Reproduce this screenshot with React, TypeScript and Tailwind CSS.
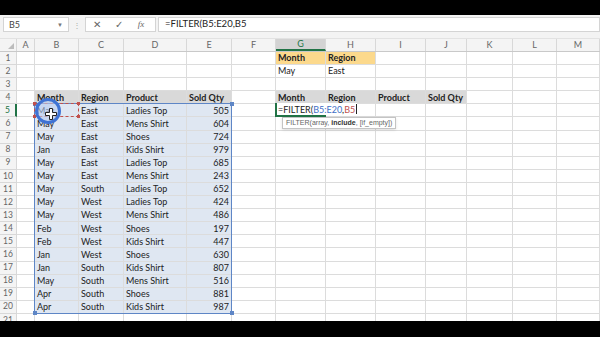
import clsx from 'clsx';

// column widths: row header, A..M
const colW = [
  'w-[17px]', 'w-[18px]', 'w-[44px]', 'w-[45px]', 'w-[63px]', 'w-[45px]', 'w-[44px]',
  'w-[50px]', 'w-[50px]', 'w-[50px]', 'w-[41px]', 'w-[46px]', 'w-[44px]', 'w-[43px]',
];
const letters = ['', 'A', 'B', 'C', 'D', 'E', 'F', 'G', 'H', 'I', 'J', 'K', 'L', 'M'];

const data: [string, string, string, number][] = [
  ['May', 'East', 'Ladies Top', 505],
  ['May', 'East', 'Mens Shirt', 604],
  ['May', 'East', 'Shoes', 724],
  ['Jan', 'East', 'Kids Shirt', 979],
  ['May', 'East', 'Ladies Top', 685],
  ['May', 'East', 'Mens Shirt', 243],
  ['May', 'South', 'Ladies Top', 652],
  ['May', 'West', 'Ladies Top', 424],
  ['May', 'West', 'Mens Shirt', 486],
  ['Feb', 'West', 'Shoes', 197],
  ['Feb', 'West', 'Kids Shirt', 447],
  ['Jan', 'West', 'Shoes', 630],
  ['Jan', 'South', 'Kids Shirt', 807],
  ['May', 'South', 'Mens Shirt', 516],
  ['Apr', 'South', 'Shoes', 881],
  ['Apr', 'South', 'Kids Shirt', 987],
];

type Cell = { v?: string; cls?: string };

function getCell(r: number, c: number): Cell {
  const hdr = 'font-bold text-[9.5px] bg-[#d9d9d9]';
  if (r === 1 && c === 7) return { v: 'Month', cls: 'font-bold text-[9.5px] bg-[#fcd98c]' };
  if (r === 1 && c === 8) return { v: 'Region', cls: 'font-bold text-[9.5px] bg-[#fcd98c]' };
  if (r === 2 && c === 7) return { v: 'May' };
  if (r === 2 && c === 8) return { v: 'East' };
  if (r === 4) {
    const h: Record<number, string> = { 2: 'Month', 3: 'Region', 4: 'Product', 5: 'Sold Qty', 7: 'Month', 8: 'Region', 9: 'Product', 10: 'Sold Qty' };
    if (h[c]) return { v: h[c], cls: hdr };
  }
  if (r >= 5 && r <= 20 && c >= 2 && c <= 5) {
    const row = data[r - 5];
    const v = c === 5 ? String(row[3]) : row[c - 2];
    return { v, cls: clsx('bg-[#dfe7f2]', c === 5 && 'justify-end') };
  }
  return {};
}

function PlusCursor() {
  return (
    <svg width="12" height="12" viewBox="0 0 12 12" className="absolute left-[7px] top-[7px]">
      <path d="M4.5 0.5h3v4h4v3h-4v4h-3v-4h-4v-3h4z" fill="#fff" stroke="#222" strokeWidth="1" />
    </svg>
  );
}

function FormulaBar() {
  return (
    <div className="h-[24px] bg-[#f3f3f3] border-b border-[#e2e2e2] flex items-start pt-[2px] text-[#444]">
      <div className="ml-[3px] w-[66px] h-[15px] bg-white border border-[#d4d4d4] flex items-center justify-between px-[5px] text-[9px]">
        <span>B5</span>
        <span className="text-[6px] text-[#777]">▼</span>
      </div>
      <div className="w-[16px] h-[15px] flex items-center justify-center text-[8px] text-[#aaa]">⋮</div>
      <div className="w-[71px] h-[15px] bg-white border border-[#d4d4d4] flex items-center text-[#666]">
        <span className="w-[22px] text-center text-[10px]">✕</span>
        <span className="w-[22px] text-center text-[10px]">✓</span>
        <span className="w-[22px] text-center text-[9px] italic font-['Liberation_Serif',serif]">fx</span>
      </div>
      <div className="ml-[2px] flex-1 h-[15px] bg-white border border-[#d4d4d4] flex items-center px-[6px] text-[9.5px] text-[#222]">
        =FILTER(B5:E20,B5
      </div>
    </div>
  );
}

function HeaderRow() {
  return (
    <div className="flex h-[13px] shrink-0 bg-[#f4f4f4] border-b border-[#c9c9c9]">
      {colW.map((w, c) => (
        <div
          key={c}
          className={clsx(
            w,
            'shrink-0 h-full border-r border-[#d8d8d8] flex items-center justify-center text-[9px] text-[#666] relative',
            c === 7 && 'bg-[#d3d3d3] border-b-2 border-b-[#217346] text-[#217346]'
          )}
        >
          {c === 0 ? (
            <div className="absolute right-[2px] bottom-[2px] w-0 h-0 border-l-[6px] border-l-transparent border-b-[6px] border-b-[#bcbcbc]" />
          ) : (
            letters[c]
          )}
        </div>
      ))}
    </div>
  );
}

function SheetRow({ r }: { r: number }) {
  return (
    <div className="flex h-[13.1px] shrink-0">
      {colW.map((w, c) => {
        if (c === 0) {
          return (
            <div
              key={c}
              className={clsx(
                w,
                'shrink-0 h-full border-r border-b border-[#d8d8d8] bg-[#f4f4f4] flex items-center justify-center text-[8.5px] text-[#666]',
                r === 5 && 'bg-[#d3d3d3] border-r-2 border-r-[#217346] text-[#217346]'
              )}
            >
              {r}
            </div>
          );
        }
        const cell = getCell(r, c);
        const isB5 = r === 5 && c === 2;
        const isG5 = r === 5 && c === 7;
        return (
          <div
            key={c}
            className={clsx(
              w,
              'shrink-0 h-full border-r border-b border-[#dcdcdc] flex items-center px-[2px] text-[9px] text-[#222] whitespace-nowrap',
              cell.cls,
              (isB5 || isG5) && 'relative'
            )}
          >
            {cell.v}
            {isB5 && (
              <>
                {/* range highlight B5:E20 */}
                <div className="absolute left-[-1px] top-[-1px] w-[198px] h-[210.6px] border-[1.5px] border-[#5e86c6] pointer-events-none">
                  <div className="absolute -left-[2.5px] -top-[2.5px] w-[4px] h-[4px] bg-[#5e86c6]" />
                  <div className="absolute -right-[2.5px] -top-[2.5px] w-[4px] h-[4px] bg-[#5e86c6]" />
                  <div className="absolute -left-[2.5px] -bottom-[2.5px] w-[4px] h-[4px] bg-[#5e86c6]" />
                  <div className="absolute -right-[2.5px] -bottom-[2.5px] w-[4px] h-[4px] bg-[#5e86c6]" />
                </div>
                {/* B5 reference */}
                <div className="absolute left-[-1px] top-[-1px] w-[45px] h-[14px] border border-dashed border-[#c0504d]">
                  <div className="absolute -left-[2px] -top-[2px] w-[3px] h-[3px] bg-[#c0504d]" />
                  <div className="absolute -right-[2px] -top-[2px] w-[3px] h-[3px] bg-[#c0504d]" />
                  <div className="absolute -left-[2px] -bottom-[2px] w-[3px] h-[3px] bg-[#c0504d]" />
                  <div className="absolute -right-[2px] -bottom-[2px] w-[3px] h-[3px] bg-[#c0504d]" />
                </div>
                {/* mouse highlight */}
                <div className="absolute left-[0px] top-[-6px] w-[26px] h-[26px] rounded-full border-[3px] border-[#3f73d4] bg-[#b9cdf0]/60">
                  <PlusCursor />
                </div>
              </>
            )}
            {isG5 && (
              <>
                <div className="absolute left-[-1px] top-[-1px] w-[51px] h-[14.1px] border-2 border-[#217346]" />
                <div className="absolute left-[1px] top-[-1px] h-[12px] w-[80px] bg-white flex items-center pl-[1px] text-[9px] z-10">
                  <span>=FILTER(</span>
                  <span className="text-[#3f6fc6]">B5:E20</span>
                  <span>,</span>
                  <span className="text-[#c0504d]">B5</span>
                  <span className="ml-[1px] w-px h-[10px] bg-[#222]" />
                </div>
                <div className="absolute left-[6px] top-[13px] h-[12px] px-[3px] bg-white border border-[#c4c4c4] shadow-sm flex items-center text-[7px] text-[#666] z-10 font-['Liberation_Sans',sans-serif]">
                  FILTER(array,&nbsp;<b className="text-[#333]">include</b>, [if_empty])
                </div>
              </>
            )}
          </div>
        );
      })}
    </div>
  );
}

export default function App() {
  const rows = Array.from({ length: 21 }, (_, i) => i + 1);
  return (
    <div className="w-[600px] h-[337px] bg-black flex flex-col overflow-hidden font-['Lato','Liberation_Sans',sans-serif]">
      <div className="h-[15px] shrink-0 bg-black" />
      <FormulaBar />
      <div className="h-[282px] shrink-0 bg-white flex flex-col overflow-hidden">
        <HeaderRow />
        {rows.map((r) => (
          <SheetRow key={r} r={r} />
        ))}
      </div>
      <div className="flex-1 bg-black" />
    </div>
  );
}
